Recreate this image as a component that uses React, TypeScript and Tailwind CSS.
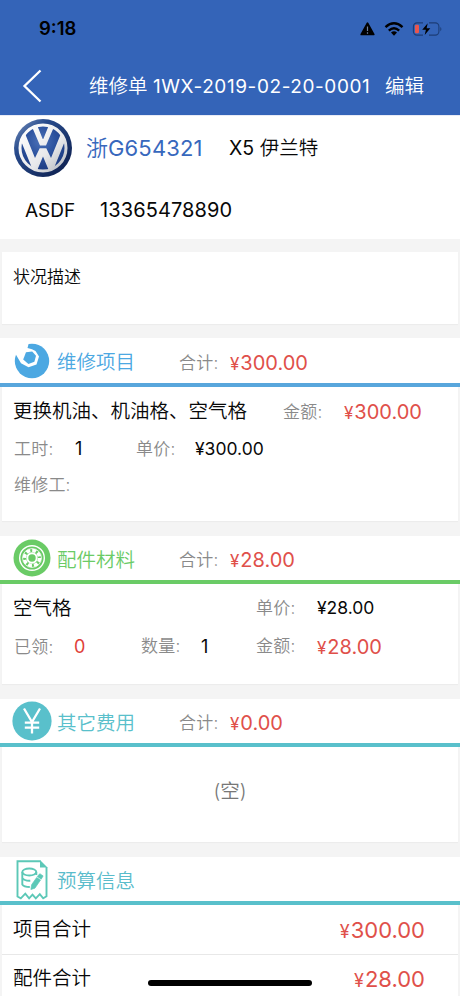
import type { ReactNode } from "react";

function Red({ value, large = false }: { value: string; large?: boolean }) {
  return (
    <span className={`font-normal text-[#e0504a] ${large ? "text-[22px]" : "text-[20px]"}`}>
      <span className={large ? "mr-px text-[18px]" : "mr-px text-[17px]"}>¥</span>
      {value}
    </span>
  );
}

function Label({ children }: { children: ReactNode }) {
  return <span className="text-[17px] font-[350] tracking-[0.2px] text-[#8a8a8a]">{children}</span>;
}

function StatusIcons() {
  return (
    <div className="flex items-center">
      <svg width="15" height="14" viewBox="0 0 15 14">
        <path d="M7.5 1.3 13.7 12.4H1.3Z" fill="#000" stroke="#000" strokeWidth="1.8" strokeLinejoin="round" />
        <path d="M7.5 4.5v4.500M7.5 10.200v1.500" stroke="#6d7fa0" strokeWidth="1.2" />
      </svg>
      <svg className="ml-[9px]" width="20" height="14" viewBox="0 0 20 14">
        <g fill="none" stroke="#000" strokeWidth="2.4">
          <path d="M1.5 5.2Q10-2.5 18.5 5.2" />
          <path d="M4.8 8.600Q10 3.9 15.200 8.600" />
        </g>
        <path d="M7 10.600Q10 8 13 10.600L10 13.700Z" />
      </svg>
      <svg className="ml-[8px]" width="30" height="14" viewBox="0 0 30 14">
        <path d="M11 .9H5A3.6 3.6 0 0 0 1.4 4.500v5A3.600 3.600 0 0 0 5 13.100h6M17 .9h6.300A3.600 3.600 0 0 1 26.900 4.500v5a3.600 3.600 0 0 1-3.600 3.600H17" fill="none" stroke="#1c3d76" strokeWidth="1.1" />
        <path d="M28.300 4.700q2.200 2.300 0 4.600Z" fill="#1c3d76" />
        <rect x="3" y="2.700" width="4" height="8.600" rx="1.200" fill="#e8564e" />
        <path d="M15.700 1.300 10.200 7.700h3.700l-1.200 5.200 5.600-6.700h-3.700Z" />
      </svg>
    </div>
  );
}

function VwLogo() {
  return (
    <svg width="60" height="60" viewBox="0 0 60 60">
      <defs>
        <linearGradient id="rim" x1="0" y1="0" x2="1" y2="1">
          <stop offset="0" stopColor="#7d97c2" />
          <stop offset=".3" stopColor="#284b8c" />
          <stop offset="1" stopColor="#0a1a47" />
        </linearGradient>
        <radialGradient id="face" cx=".45" cy=".35" r=".65">
          <stop offset="0" stopColor="#4c72b8" />
          <stop offset=".5" stopColor="#2c529e" />
          <stop offset="1" stopColor="#1b3a80" />
        </radialGradient>
        <linearGradient id="chrome" gradientUnits="userSpaceOnUse" x1="8" y1="8" x2="52" y2="52">
          <stop offset="0" stopColor="#ffffff" />
          <stop offset=".6" stopColor="#e8e9eb" />
          <stop offset="1" stopColor="#b4b8bf" />
        </linearGradient>
        <clipPath id="inner">
          <circle cx="30" cy="30" r="23.500" />
        </clipPath>
      </defs>
      <circle cx="30" cy="30" r="29" fill="url(#rim)" />
      <circle cx="30" cy="30" r="23" fill="url(#face)" stroke="url(#chrome)" strokeWidth="3" />
      <g clipPath="url(#inner)" fill="url(#chrome)">
        <path d="M18 6.500 23.200 5 29.700 21h.6L36.800 5 42 6.500 33 27.500h-6Z" />
        <path d="M6 18 11 13 22 40 26.700 30.300h6.600L38 40 49 13 54 18 39.800 53h-3.700L30 38.500 23.900 53h-3.700Z" />
      </g>
    </svg>
  );
}

function WrenchIcon() {
  return (
    <svg width="36" height="36" viewBox="0 0 36 36">
      <circle cx="18" cy="18" r="17.200" fill="#4ca8e2" />
      <path d="M-1 9 2 11.800 7 20.300 14.500 24.200 22.500 21.500 25 13.500 21.500 8 18 6.200 13.500 5 14.800 0H-1Z" fill="#fff" />
      <path d="m12 9.200 6.200-.7 3.800 4.200-1.600 6-6 2.300-5.200-4.400Z" fill="#4ca8e2" />
    </svg>
  );
}

function WheelIcon() {
  return (
    <svg width="38" height="38" viewBox="0 0 38 38">
      <circle cx="19" cy="19" r="18.500" fill="#6acb66" />
      <g fill="none" stroke="#fff">
        <circle cx="19" cy="19" r="12.300" strokeWidth="1.400" />
        <circle cx="19" cy="19" r="7.600" strokeWidth="3.500" strokeDasharray="3.900 2.069" />
        <circle cx="19" cy="19" r="9.400" strokeWidth=".8" />
        <circle cx="19" cy="19" r="4.700" strokeWidth="2" />
      </g>
    </svg>
  );
}

function YenIcon() {
  return (
    <svg width="40" height="40" viewBox="0 0 40 40">
      <circle cx="20" cy="20" r="19.600" fill="#59c0cb" />
      <path d="m12 7.500 8 13.500 8-13.500M20 21v11.500M12.800 21.600h14.400M12.800 26.600h14.400" fill="none" stroke="#fff" strokeWidth="2.300" />
    </svg>
  );
}

function BudgetIcon() {
  return (
    <svg width="32" height="40" viewBox="0 0 32 40">
      <g fill="none" stroke="#5cc8b7" strokeWidth="1.900">
        <path d="M24.500 1.200H1.500V36.500L4.800 38.300 9.300 33.700 13.100 38.300 16.500 34.700 19.800 38.300 23.800 34.200 27.200 38.300 30.500 36.300V7" />
        <ellipse cx="13.300" cy="12" rx="7" ry="3.500" />
        <path d="M6.300 12v12.400q1.500 2.500 7.500 2.600M6.300 18q2 3 8 2.700M20.300 12v3" />
      </g>
      <path d="M24 0v7.500h7.500Z" fill="#5cc8b7" />
      <path d="m21.300 16.500 2.500-2.800 3.300 2.200-1.900 3.300ZM20.700 17.500l3.800 2.600-5.600 8.100-4 1.300.7-4.800Z" fill="#5cc8b7" stroke="#5cc8b7" strokeWidth=".7" />
    </svg>
  );
}

function SectionHead({ icon, title, total, className }: { icon: ReactNode; title: string; total?: string; className: string }) {
  return (
    <div className={`grid shrink-0 grid-cols-[7px_50px_122px_51px_1fr] items-center border-b-4 bg-white ${className}`}>
      <span />
      <div className="flex justify-center">{icon}</div>
      <span className="pt-[5px] text-[19.5px] font-[350]">{title}</span>
      {total && <span className="pt-[5px]"><Label>合计:</Label></span>}
      {total && <span className="pt-1"><Red value={total} /></span>}
    </div>
  );
}

const card = "mx-0.5 shrink-0 bg-white shadow-[0_1px_1px_#ececec]";

export default function App() {
  return (
    <div className="flex h-[996px] w-[460px] flex-col overflow-hidden whitespace-nowrap bg-[#f4f4f4] font-['Inter','Noto_Sans_CJK_SC',sans-serif] font-[350] leading-none text-[#080808]">
      <header className="h-[115px] shrink-0 bg-[#3464b8]">
        <div className="flex h-[57px] items-center justify-between pl-[39px] pr-[18px]">
          <span className="text-[18.5px] font-semibold text-black">9:18</span>
          <StatusIcons />
        </div>
        <div className="grid h-[58px] grid-cols-[89px_296px_1fr] items-center text-[19.5px] text-white">
          <svg className="ml-[22px]" width="21" height="34" viewBox="0 0 21 34">
            <path d="M18.500 1.500 2.500 17 18.500 32.500" fill="none" stroke="#fff" strokeWidth="2.300" />
          </svg>
          <span className="pt-0.5">维修单 <span className="text-[19px] font-normal tracking-[0.58px]">1WX-2019-02-20-0001</span></span>
          <span className="pt-0.5">编辑</span>
        </div>
      </header>

      <section className="h-[124px] shrink-0 border-t border-[#e8ebf6] bg-white">
        <div className="grid h-[64px] grid-cols-[86px_143px_1fr] items-center">
          <div className="pl-[13px]"><VwLogo /></div>
          <span className="text-[22px] text-[#3768bd]">浙<span className="font-normal tracking-[0.15px]">G654321</span></span>
          <span className="pt-0.5 text-[19.5px]"><span className="font-normal">X5</span> 伊兰特</span>
        </div>
        <div className="grid h-[60px] grid-cols-[75px_1fr] items-center pl-[25px] text-[20px] font-normal">
          <span className="text-[19px]">ASDF</span>
          <span className="tracking-[0.1px]">13365478890</span>
        </div>
      </section>

      <section className={`${card} mt-[13px] h-[72px] pl-[11px] pt-[17px]`}>
        <span className="text-[17px]">状况描述</span>
      </section>

      <SectionHead className="mt-[14px] h-[49px] border-[#58a6dc] text-[#4ca8e2]" icon={<WrenchIcon />} title="维修项目" total="300.00" />
      <section className={`${card} h-[134px] pl-[11px]`}>
        <div className="grid h-[49px] grid-cols-[270px_61px_1fr] items-center">
          <span className="text-[19.5px]">更换机油、机油格、空气格</span>
          <span className="pt-0.5"><Label>金额:</Label></span>
          <Red value="300.00" />
        </div>
        <div className="grid h-[26px] grid-cols-[61px_61px_59px_1fr] items-center pl-px text-[18px] font-normal">
          <Label>工时:</Label>
          <span>1</span>
          <Label>单价:</Label>
          <span className="text-[17.5px]">¥300.00</span>
        </div>
        <div className="flex h-[47px] items-center pl-px"><Label>维修工:</Label></div>
      </section>

      <SectionHead className="mt-[15px] h-[48px] border-[#6acb66] text-[#6acb66]" icon={<WheelIcon />} title="配件材料" total="28.00" />
      <section className={`${card} h-[100px] pl-[11px]`}>
        <div className="grid h-[48px] grid-cols-[243px_61px_1fr] items-center text-[17.5px] font-normal">
          <span className="pt-px text-[19.5px] font-[350]">空气格</span>
          <Label>单价:</Label>
          <span>¥28.00</span>
        </div>
        <div className="grid h-[29px] grid-cols-[61px_67px_60px_55px_61px_1fr] items-center text-[18px] font-normal">
          <span className="pl-px"><Label>已领:</Label></span>
          <span className="text-[#e04038]">0</span>
          <Label>数量:</Label>
          <span>1</span>
          <Label>金额:</Label>
          <Red value="28.00" />
        </div>
      </section>

      <SectionHead className="mt-[15px] h-[48px] border-[#59c0cb] text-[#59c0cb]" icon={<YenIcon />} title="其它费用" total="0.00" />
      <section className={`${card} flex h-[95px] items-center justify-center pb-[5px]`}>
        <span className="text-[19.5px] text-[#777]">(空)</span>
      </section>

      <SectionHead className="mt-[15px] h-[48px] border-[#59c0cb] text-[#5abccb]" icon={<div className="pt-0.5"><BudgetIcon /></div>} title="预算信息" />
      <section className="mx-0.5 shrink-0 bg-white">
        <div className="flex h-[50px] items-center justify-between border-b border-[#e8e8e8] pl-[11px] pr-[33px]">
          <span className="text-[19.5px]">项目合计</span>
          <Red value="300.00" large />
        </div>
        <div className="flex h-[48px] items-center justify-between pl-[11px] pr-[33px]">
          <span className="text-[19.5px]">配件合计</span>
          <Red value="28.00" large />
        </div>
      </section>
      <div className="fixed left-[148px] top-[980px] h-[6px] w-[164px] rounded-full bg-black" />
    </div>
  );
}
